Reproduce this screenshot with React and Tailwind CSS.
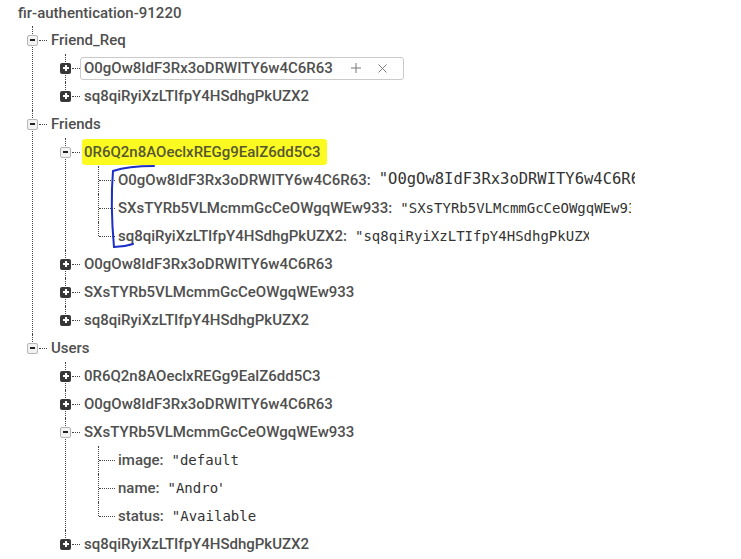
import { Plus, X } from 'lucide-react';

const tree = [
  {
    key: 'Friend_Req',
    open: true,
    children: [
      { key: 'O0gOw8IdF3Rx3oDRWITY6w4C6R63', editing: true },
      { key: 'sq8qiRyiXzLTIfpY4HSdhgPkUZX2' },
    ],
  },
  {
    key: 'Friends',
    open: true,
    children: [
      {
        key: '0R6Q2n8AOeclxREGg9EalZ6dd5C3',
        open: true,
        marked: true,
        children: [
          { key: 'O0gOw8IdF3Rx3oDRWITY6w4C6R63', value: '"O0gOw8IdF3Rx3oDRWITY6w4C6R63"', clip: 'w-[256px] text-[15.5px]' },
          { key: 'SXsTYRb5VLMcmmGcCeOWgqWEw933', value: '"SXsTYRb5VLMcmmGcCeOWgqWEw933"', clip: 'w-[231px] text-[14px]' },
          { key: 'sq8qiRyiXzLTIfpY4HSdhgPkUZX2', value: '"sq8qiRyiXzLTIfpY4HSdhgPkUZX2"', clip: 'w-[234px] text-[14px]' },
        ],
      },
      { key: 'O0gOw8IdF3Rx3oDRWITY6w4C6R63' },
      { key: 'SXsTYRb5VLMcmmGcCeOWgqWEw933' },
      { key: 'sq8qiRyiXzLTIfpY4HSdhgPkUZX2' },
    ],
  },
  {
    key: 'Users',
    open: true,
    children: [
      { key: '0R6Q2n8AOeclxREGg9EalZ6dd5C3' },
      { key: 'O0gOw8IdF3Rx3oDRWITY6w4C6R63' },
      {
        key: 'SXsTYRb5VLMcmmGcCeOWgqWEw933',
        open: true,
        children: [
          { key: 'image', value: '"default"', clip: 'w-[67px] text-[14px]' },
          { key: 'name', value: '"Andro"', clip: 'w-[54px] text-[14px]' },
          { key: 'status', value: '"Available"', clip: 'w-[84px] text-[14px]' },
        ],
      },
      { key: 'sq8qiRyiXzLTIfpY4HSdhgPkUZX2' },
    ],
  },
];

const Toggle = ({ open }) =>
  open ? (
    <span className="-ml-[6px] w-[11px] h-[11px] shrink-0 flex items-center justify-center rounded-[2px] border border-[#b5b5b5] bg-[#f2f2f2]">
      <span className="w-[5px] h-[2px] bg-[#222]" />
    </span>
  ) : (
    <span className="-ml-[6px] w-[11px] h-[11px] shrink-0 flex items-center justify-center rounded-[2px] bg-[#383838]">
      <span className="relative w-[6px] h-[2px] bg-white">
        <span className="absolute left-[2px] -top-[2px] w-[2px] h-[6px] bg-white" />
      </span>
    </span>
  );

const Row = ({ node, last }) => {
  const hasKids = node.children || node.value === undefined;
  return (
    <div className="flex items-center h-[28px]">
      <span
        className={`-ml-[1px] w-0 h-[14px] self-start border-l border-dotted ${
          last ? 'border-[#444]' : 'border-transparent'
        }`}
      />
      {hasKids ? (
        <>
          <Toggle open={node.open} />
          <span className="ml-[1px] w-[8px] border-t border-dotted border-[#444]" />
          {node.editing ? (
            <div className="w-[324px] h-[23px] pl-[3px] pr-[13px] flex items-center border border-[#cacaca] rounded-[3px]">
              <span className="font-medium text-[15px] text-[#4f4f4f]">{node.key}</span>
              <span className="flex-1" />
              <Plus size={16} strokeWidth={1.5} className="text-[#777]" />
              <X size={15} strokeWidth={1.5} className="ml-[11px] text-[#777]" />
            </div>
          ) : node.marked ? (
            <span className="ml-[2px] pl-[2px] pr-[6px] py-[2px] rounded-[3px] bg-[#fbfb22] font-medium text-[15px] text-[#57572f]">
              {node.key}
            </span>
          ) : (
            <span className="ml-[4px] font-medium text-[15px] text-[#4f4f4f]">{node.key}</span>
          )}
        </>
      ) : (
        <>
          <span className="w-[16px] border-t border-dotted border-[#444]" />
          <span className="ml-[3px] font-medium text-[15px] text-[#4f4f4f] whitespace-nowrap">{node.key}:</span>
          <span
            className={`ml-[8px] ${node.clip} overflow-hidden whitespace-nowrap text-[#333] font-['DejaVu_Sans_Mono',monospace]`}
          >
            {node.value}
          </span>
        </>
      )}
    </div>
  );
};

const Item = ({ node, last }) => (
  <div className={`border-l border-dotted ${last ? 'border-transparent' : 'border-[#444]'}`}>
    <Row node={node} last={last} />
    {node.children && (
      <div className="ml-[32px]">
        {node.children.map((c, i) => (
          <Item key={c.key + i} node={c} last={i === node.children.length - 1} />
        ))}
      </div>
    )}
  </div>
);

export default function App() {
  return (
    <div className="relative w-[741px] h-[559px] bg-white overflow-hidden font-['Roboto',sans-serif]">
      {/* Title */}
      <div className="h-[26px] pl-[18px] flex items-center">
        <span className="font-medium text-[15px] text-[#4f4f4f]">fir-authentication-91220</span>
      </div>

      {/* Tree */}
      <div className="ml-[32px]">
        {tree.map((n, i) => (
          <Item key={n.key} node={n} last={i === tree.length - 1} />
        ))}
      </div>

      {/* Hand-drawn bracket */}
      <svg className="absolute left-0 top-0 pointer-events-none" width="741" height="559">
        <path
          d="M154 166 C 140 166, 122 168, 113 171 C 111 195, 112 225, 114 247 C 120 247, 127 246, 133 244"
          fill="none"
          stroke="#1c2ec8"
          strokeWidth="2"
          strokeLinecap="round"
        />
      </svg>
    </div>
  );
}
